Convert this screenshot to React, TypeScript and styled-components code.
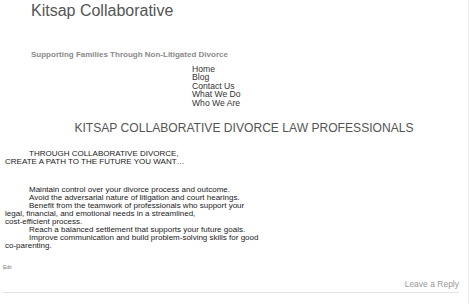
import React from "react";
import styled, { createGlobalStyle } from "styled-components";

const Global = createGlobalStyle`
  html, body { margin: 0; padding: 0; background: #fff; }
  body { font-family: "Liberation Sans", Arial, sans-serif; }
`;

const Page = styled.div`
  width: 468px;
  height: 304px;
  border-right: 1px solid #ececec;
  display: flex;
  flex-direction: column;
`;

const Header = styled.header`
  padding-left: 31px;
  display: flex;
  flex-direction: column;
`;

const SiteTitle = styled.h1`
  margin: 2px 0 0;
  font-size: 16px;
  font-weight: normal;
  line-height: 18px;
  color: #555;
`;

const Tagline = styled.p`
  margin: 30px 0 0;
  font-size: 8px;
  font-weight: bold;
  line-height: 10px;
  color: #8a8a8a;
`;

const Nav = styled.ul`
  list-style: none;
  margin: 5px 0 0 192px;
  padding: 0;
  font-size: 8.6px;
  line-height: 8.4px;
  color: #333;
`;

const Heading = styled.h2`
  margin: 14px 0 0;
  padding-left: 20px;
  text-align: center;
  font-size: 12.1px;
  font-weight: normal;
  line-height: 14px;
  color: #555;
`;

const Content = styled.div`
  padding-left: 5px;
  font-size: 8px;
  line-height: 8px;
  color: #1a1a1a;
`;

const Para = styled.p<{ $top: number }>`
  margin: ${(p) => p.$top}px 0 0;
  text-indent: 24px;
`;

const EditLink = styled.div`
  margin: 14px 0 0 3px;
  font-size: 5px;
  line-height: 6px;
  color: #777;
`;

const Footer = styled.div`
  margin: 9px 9px 0 3px;
  padding-bottom: 3px;
  border-bottom: 1px solid #e2e2e2;
  text-align: right;
  font-size: 8.5px;
  line-height: 10px;
  color: #999;
`;

export default function App() {
  return (
    <>
      <Global />
      <Page>
        <Header>
          <SiteTitle>Kitsap Collaborative</SiteTitle>
          <Tagline>Supporting Families Through Non-Litigated Divorce</Tagline>
        </Header>
        <Nav>
          <li>Home</li>
          <li>Blog</li>
          <li>Contact Us</li>
          <li>What We Do</li>
          <li>Who We Are</li>
        </Nav>
        <Heading>KITSAP COLLABORATIVE DIVORCE LAW PROFESSIONALS</Heading>
        <Content>
          <Para $top={15}>
            THROUGH COLLABORATIVE DIVORCE,
            <br />
            CREATE A PATH TO THE FUTURE YOU WANT…
          </Para>
          <Para $top={20}>
            Maintain control over your divorce process and outcome.
          </Para>
          <Para $top={0}>Avoid the adversarial nature of litigation and court hearings.</Para>
          <Para $top={0}>
            Benefit from the teamwork of professionals who support your
            <br />
            legal, financial, and emotional needs in a streamlined,
            <br />
            cost-efficient process.
          </Para>
          <Para $top={0}>Reach a balanced settlement that supports your future goals.</Para>
          <Para $top={0}>
            Improve communication and build problem-solving skills for good
            <br />
            co-parenting.
          </Para>
        </Content>
        <EditLink>Edit</EditLink>
        <Footer>Leave a Reply</Footer>
      </Page>
    </>
  );
}
